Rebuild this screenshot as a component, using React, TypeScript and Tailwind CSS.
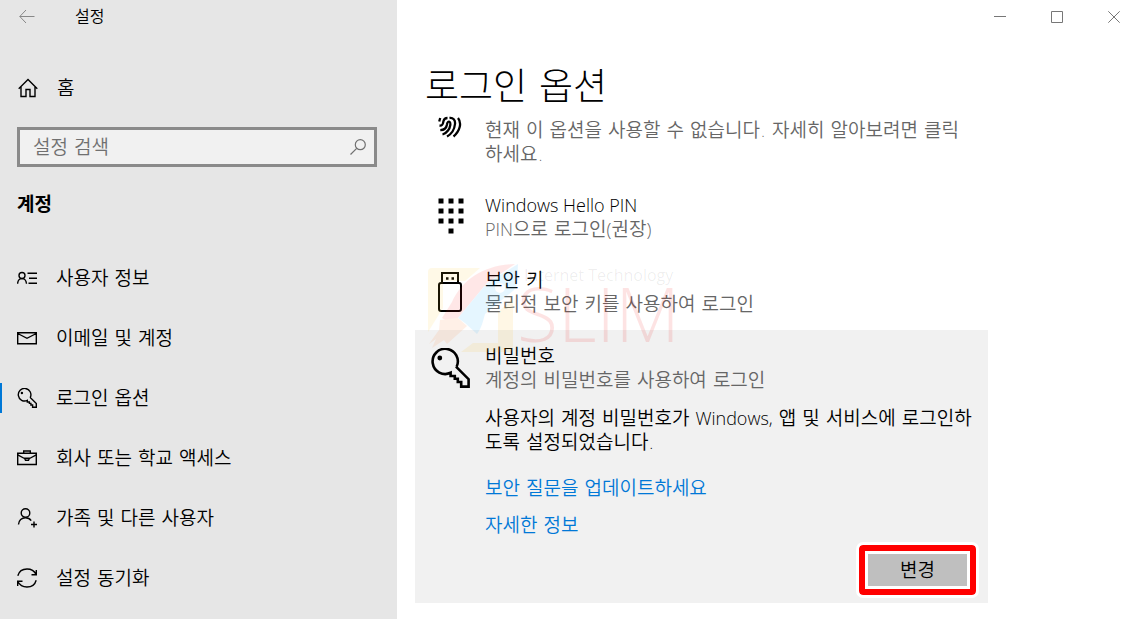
import type { ReactNode } from "react";

const KO = "font-['DejaVu_Sans','Noto_Sans_CJK_KR',sans-serif] font-[350]";
const EN = "font-['Open_Sans','Noto_Sans_CJK_KR',sans-serif] text-[18px] font-light";

function Icon({ size, children, w = 1.5 }: { size: string; children: ReactNode; w?: number }) {
  return (
    <svg className={`${size} shrink-0`} viewBox="0 0 20 20" fill="none" stroke="#000" strokeWidth={w} aria-hidden="true">
      {children}
    </svg>
  );
}

const keyShape = (
  <>
    <path d="M13.3 9.4A6.3 6.3 0 1 0 10.3 12.400V14H12.400V15.400H13.900V17H15.600V19.300H19.300V15.600L13 9.300" />
    <circle cx="4.900" cy="5" r="1.200" fill="#000" stroke="none" />
  </>
);

const nav: { label: string; icon: ReactNode; active?: boolean }[] = [
  {
    label: "사용자 정보",
    icon: (
      <>
        <circle cx="5" cy="7.500" r="3" />
        <path d="M.6 15.700C.8 12.600 2.700 10.600 5 10.600S9.200 12.600 9.500 15.700M10.500 5.200H20M12 10.200H20M11.500 15.200H20" />
      </>
    ),
  },
  { label: "이메일 및 계정", icon: <path d="M.7 4.700H19.300V15.800H.7ZM.7 5.500L10 10.300L19.300 5.500" /> },
  { label: "로그인 옵션", active: true, icon: keyShape },
  {
    label: "회사 또는 학교 액세스",
    icon: (
      <>
        <path d="M.7 5.300H19.300V16.500H.7Z" />
        <path d="M6.700 5.300V3H13.300V5.300M.7 6.800L7.500 10.500M12.500 10.500L19.300 6.800M7.600 10.300H12.400L11.500 12.300H8.500Z" />
      </>
    ),
  },
  {
    label: "가족 및 다른 사용자",
    icon: (
      <>
        <circle cx="8.500" cy="5" r="4.300" />
        <path d="M1.500 16.500C1.700 12.500 4.700 9.700 8.500 9.700C11 9.700 13 10.800 14.200 12.600M17 13.500V19.500M14 16.500H20" />
      </>
    ),
  },
  {
    label: "설정 동기화",
    icon: <path d="M.8 7.800C2 3.500 5.500 1 10 1C14.300 1 17.600 3.300 19.200 6.500M19.300 2V6.800H14.500M19.200 12.200C18 16.500 14.500 19 10 19C5.700 19 2.400 16.700.8 13.500M.7 18V13.200H5.500" />,
  },
];

function Watermark() {
  return (
    <svg className="pointer-events-none absolute left-3 -top-[66px] h-28 w-72 overflow-visible" viewBox="0 0 288 112" aria-hidden="true">
      <g opacity="0.1">
        <path d="M5 4H53L38 17H16V44L1 68V8Q1 4 5 4Z" fill="#fc2" />
        <path d="M86 35V84Q86 88 82 88H34L46 79H71V48Z" fill="#fb1" />
        <path d="M15 54L25 38C36 14 58 1 88 0L60 19L31 54L28 62Z" fill="#f22" />
        <path d="M91 0C90 10 93 17 87 26L58 50C56 57 55 63 50 70L38 59L31 54L60 19ZM73 19A5 5 0 1 0 73 29A5 5 0 1 0 73 19Z" fill="#1af" fillRule="evenodd" />
        <path d="M13 56L31 54L40 62L20 80L17 76L5 84L9 75L2 80L12 66Z" fill="#f72" />
      </g>
      <text x="97" y="17" fontSize="16" fontWeight="400" fill="#000" fillOpacity="0.07" fontFamily="Open Sans, sans-serif">Internet Technology</text>
      <text x="90" y="78" fontSize="75" fontWeight="300" fill="#e00" fillOpacity="0.11" fontFamily="Open Sans, sans-serif">SLIM</text>
    </svg>
  );
}

function Option({ icon, title, children }: { icon: ReactNode; title: ReactNode; children: ReactNode }) {
  return (
    <div className="flex">
      <div className="flex w-[70px] shrink-0 justify-center pt-1">{icon}</div>
      <div className="min-w-0 flex-1 leading-6">
        <h2>{title}</h2>
        <p className="text-[#666]">{children}</p>
      </div>
    </div>
  );
}

export default function App() {
  return (
    <div className={`${KO} flex min-h-screen bg-white text-[19px] leading-6 text-black`}>
      <aside className="w-[397px] shrink-0 bg-[#e6e6e6]">
        <header className="flex h-8 items-center gap-10 pt-0.5 pl-[19px]">
          <button type="button" aria-label="뒤로">
            <svg className="block h-4 w-4" viewBox="0 0 16 16" fill="none" stroke="#888" aria-hidden="true">
              <path d="M15.500 7.500H.8M7 1L.8 7.500L7 14" />
            </svg>
          </button>
          <h1 className="text-base">설정</h1>
        </header>
        <a href="#home" className="mt-11 flex h-6 items-center gap-[19px] pl-[18px]">
          <Icon size="h-5 w-5" w={1.4}>
            <path d="M.7 10.700L10 1.500L19.300 10.700M3 8.700V18.500H8V11.500H12V18.500H17V8.700" />
          </Icon>
          홈
        </a>
        <label className="mt-[27px] mr-5 ml-[17px] flex h-10 items-center border-3 border-[#8a8a8a] bg-[#f1f1f1] pr-2 pl-[13px]">
          <input type="text" aria-label="설정 검색" placeholder="설정 검색" className="min-w-0 flex-1 bg-transparent outline-none placeholder:text-[#707070] placeholder:opacity-100" />
          <svg className="h-4 w-4" viewBox="0 0 16 16" fill="none" stroke="#707070" strokeWidth="1.200" aria-hidden="true">
            <circle cx="10.300" cy="5.700" r="5" />
            <path d="M6.700 9.300L.5 15.500" />
          </svg>
        </label>
        <h2 className="mt-[25px] pl-[17px] text-[19px] font-bold">계정</h2>
        <nav className="mt-8">
          {nav.map((n) => (
            <a key={n.label} href="#" className="flex h-[60px] items-center">
              <span className={`h-[30px] w-0.5 ${n.active ? "bg-[#0078d7]" : ""}`} />
              <span className="flex w-[54px] pl-[15px]">
                <Icon size="h-5 w-5" w={1.4}>{n.icon}</Icon>
              </span>
              {n.label}
            </a>
          ))}
        </nav>
      </aside>

      <main className="flex min-w-0 flex-1 flex-col">
        <div className="flex h-8 items-center justify-end gap-[45px] pt-0.5 pr-[15px]">
          <button type="button" aria-label="최소화">
            <svg className="block h-3 w-3" viewBox="0 0 12 12" stroke="#777"><path d="M0 5.500H12" /></svg>
          </button>
          <button type="button" aria-label="최대화">
            <svg className="block h-3 w-3" viewBox="0 0 12 12" stroke="#777" fill="none"><path d="M.5.5H11.500V11.500H.5Z" /></svg>
          </button>
          <button type="button" aria-label="닫기">
            <svg className="block h-3 w-3" viewBox="0 0 12 12" stroke="#777"><path d="M.3.3L11.700 11.700M11.700.3L.3 11.700" /></svg>
          </button>
        </div>
        <h1 className="mt-[34px] pl-7 text-[37px] leading-[44px] font-light">로그인 옵션</h1>
        <div className="mr-[147px] ml-[18px]">
          <div className="mt-2 flex">
            <div className="flex w-[70px] shrink-0 justify-center">
              <svg className="-mt-0.5 h-6 w-6" viewBox="0 0 24 24" fill="none" stroke="#000" strokeWidth="2.300" aria-hidden="true">
                <path d="M1.200 5.500L2.200 2M1.500 9.500C5 10 5 7.500 5.500 5C6 3 7.500 2 9.500 2M2.300 14.200C7 14 8.500 11.500 9 8.500C9.300 6 10.500 5.300 11.500 5.800C13 6.500 12.500 11.500 10 14.500C8.500 16.500 6.500 18 4.500 18.500M11.500 2C15 1.500 17.500 4 17 8C16.500 13 13.500 18 9 20.500M20 2C24 7 22 15 15.500 20.500" />
              </svg>
            </div>
            <p className="flex-1 pr-3 text-[#666]">현재 이 옵션을 사용할 수 없습니다. 자세히 알아보려면 클릭하세요.</p>
          </div>
          <div className="mt-[27px]">
            <Option
              title={<span className={EN}>Windows Hello PIN</span>}
              icon={
                <svg className="h-[38px] w-7" viewBox="0 0 28 38" aria-hidden="true">
                  {[0, 10, 20].map((y) => [0, 10, 20].map((x) => <rect key={`${x}-${y}`} x={x + 2.5} y={y + 1.5} width="5" height="5" />))}
                  <rect x="12.500" y="31.500" width="5" height="5" />
                </svg>
              }
            >
              <span className={EN}>PIN</span>으로 로그인<span className={EN}>(</span>권장<span className={EN}>)</span>
            </Option>
          </div>
          <div className="mt-[27px]">
            <Option
              title="보안 키"
              icon={
                <svg className="h-10 w-6" viewBox="0 0 24 40" fill="none" stroke="#000" strokeWidth="2" aria-hidden="true">
                  <path d="M4 10V1H20V10" />
                  <rect x="1" y="11" width="22" height="28" rx="2" />
                  <path d="M8 6.500H10.500M13.500 6.500H16" strokeWidth="2.500" />
                </svg>
              }
            >
              물리적 보안 키를 사용하여 로그인
            </Option>
          </div>
          <section className="relative mt-3.5 bg-[#f1f1f1] pt-3.5 pr-3 pb-2">
            <Option title="비밀번호" icon={<Icon size="h-10 w-10" w={1.3}>{keyShape}</Icon>}>
              계정의 비밀번호를 사용하여 로그인
            </Option>
            <div className="pl-[70px]">
              <p className="mt-3.5">
                사용자의 계정 비밀번호가 <span className={EN}>Windows,</span> 앱 및 서비스에 로그인하도록 설정되었습니다.
              </p>
              <a href="#questions" className="mt-[22px] block text-[#0078d7]">보안 질문을 업데이트하세요</a>
              <a href="#info" className="mt-[13px] block text-[#0078d7]">자세한 정보</a>
            </div>
            <div className="mt-2 flex justify-end">
              <button type="button" className="rounded border-6 border-[#f00] bg-white p-[3px] outline-3 outline-white">
                <span className="flex h-8 w-[99px] items-center justify-center bg-[#bfbfbf]">변경</span>
              </button>
            </div>
            <Watermark />
          </section>
        </div>
      </main>
    </div>
  );
}
